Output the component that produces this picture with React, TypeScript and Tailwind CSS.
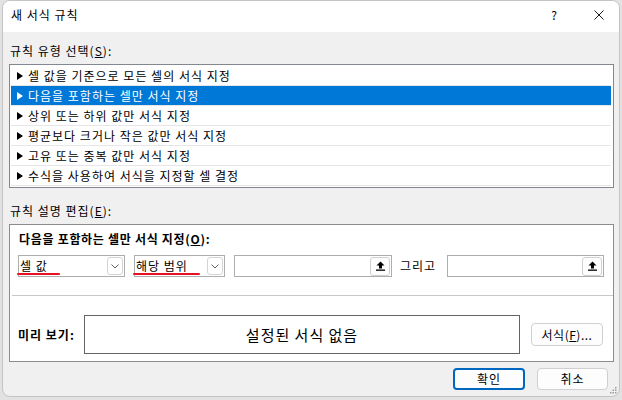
const font = { fontFamily: '"Noto Sans CJK KR", "Noto Sans", sans-serif' };

const rules = [
  "셀 값을 기준으로 모든 셀의 서식 지정",
  "다음을 포함하는 셀만 서식 지정",
  "상위 또는 하위 값만 서식 지정",
  "평균보다 크거나 작은 값만 서식 지정",
  "고유 또는 중복 값만 서식 지정",
  "수식을 사용하여 서식을 지정할 셀 결정",
];

function Chevron() {
  return (
    <span className="flex h-[18px] w-[16px] items-center justify-center rounded-[3px] border border-[#d4d4d4] bg-white">
      <svg width="8" height="5" viewBox="0 0 8 5">
        <path d="M0.5 0.5 L4 4 L7.5 0.5" fill="none" stroke="#606060" strokeWidth="1" />
      </svg>
    </span>
  );
}

function Combo({ label, width, mark }: { label: string; width: string; mark: string }) {
  return (
    <div className={`relative flex h-[22px] items-center justify-between border border-[#adadad] bg-white pl-[1px] pr-[1px] ${width}`}>
      <span className="text-[12px] leading-[16px] text-black">{label}</span>
      <Chevron />
      <span className={`absolute left-[-2px] top-[17px] h-[2px] rounded-full bg-[#e81123] ${mark}`} />
    </div>
  );
}

function RefInput({ width }: { width: string }) {
  return (
    <div className={`flex h-[22px] items-center justify-end border border-[#adadad] bg-white pr-[1px] ${width}`}>
      <span className="flex h-[19px] w-[20px] items-center justify-center rounded-[3px] border border-[#d0d0d0] bg-[#fdfdfd]">
        <svg width="9" height="10" viewBox="0 0 9 10">
          <path d="M4.5 0.5 L8.5 4.5 L6 4.5 L6 7.5 L3 7.5 L3 4.5 L0.5 4.5 Z" fill="#000" />
          <rect x="0" y="8.5" width="9" height="1.3" fill="#000" />
        </svg>
      </span>
    </div>
  );
}

export default function App() {
  return (
    <div className="h-[400px] w-[622px] overflow-hidden bg-[#e2e2e2] pl-[2px] pt-0" style={font}>
      <div className="relative flex h-[397px] w-[618px] flex-col overflow-hidden rounded-[8px] border border-[#c4c4c4] bg-[#f0f0f0] text-[12px] leading-[16px] tracking-[1px] text-black">
        {/* title bar */}
        <div className="flex h-[31px] shrink-0 items-center bg-white pl-[8px]">
          <span className="mt-[-3px]">새 서식 규칙</span>
          <span className="ml-auto mt-[-3px] w-[10px] text-center tracking-normal">?</span>
          <span className="ml-[35px] mr-[15px] mt-[-3px] flex h-[10px] w-[10px] items-center justify-center">
            <svg width="10" height="10" viewBox="0 0 10 10">
              <path d="M0.5 0.5 L9.5 9.5 M9.5 0.5 L0.5 9.5" stroke="#1a1a1a" strokeWidth="1" />
            </svg>
          </span>
        </div>

        <div className="flex flex-col pl-[6px] pr-[5px]">
          <div className="mt-[11px] pl-[1px]">
            규칙 유형 선택(<span className="underline">S</span>):
          </div>

          {/* rule type list */}
          <div className="mt-[5px] flex h-[124px] flex-col border border-[#828790] bg-white p-[1px] pr-[2px]">
            {rules.map((r, i) => {
              const sel = i === 1;
              return (
                <div
                  key={r}
                  className={`flex h-[20px] shrink-0 items-center gap-[5px] border-b border-[#e6e6e6] pl-[6px] ${
                    sel ? "bg-[#0078d7] text-white" : "bg-white text-black"
                  }`}
                >
                  <svg width="6" height="8" viewBox="0 0 6 8">
                    <path d="M0 0 L6 4 L0 8 Z" fill={sel ? "#fff" : "#000"} />
                  </svg>
                  <span>{r}</span>
                </div>
              );
            })}
          </div>

          <div className="mt-[15px] pl-[1px]">
            규칙 설명 편집(<span className="underline">E</span>):
          </div>

          {/* description panel */}
          <div className="mt-[5px] flex h-[138px] flex-col border border-[#8c8c8c] bg-white">
            <div className="mt-[6px] pl-[9px] font-bold tracking-[0.7px]">
              다음을 포함하는 셀만 서식 지정(<span className="underline">O</span>):
            </div>
            <div className="mt-[8px] flex items-center pl-[8px]">
              <Combo label="셀 값" width="w-[107px]" mark="w-[43px]" />
              <div className="ml-[9px]">
                <Combo label="해당 범위" width="w-[91px]" mark="w-[67px]" />
              </div>
              <div className="ml-[9px]">
                <RefInput width="w-[158px]" />
              </div>
              <span className="ml-[8px] w-[39px]">그리고</span>
              <div className="ml-[8px]">
                <RefInput width="w-[157px]" />
              </div>
            </div>
            <div className="ml-[2px] mt-[18px] h-px bg-[#c8c8c8]" />
            <div className="mt-[19px] flex items-center pl-[8px]">
              <span className="w-[66px] font-bold">미리 보기:</span>
              <div className="flex h-[39px] w-[436px] items-center justify-center border border-[#646464] bg-white text-[15px] leading-[20px]">
                설정된 서식 없음
              </div>
              <button className="ml-[11px] flex h-[23px] w-[72px] items-center justify-center rounded-[4px] border border-[#d0d0d0] bg-[#fdfdfd] text-[12px] tracking-[0.5px]">
                서식(<span className="underline">F</span>)...
              </button>
            </div>
          </div>

          {/* footer buttons */}
          <div className="mt-[6px] flex justify-end gap-[12px] pr-[6px]">
            <button className="flex h-[22px] w-[72px] items-center justify-center rounded-[4px] border-2 border-[#0067c0] bg-[#fdfdfd] text-[12px]">
              확인
            </button>
            <button className="flex h-[22px] w-[71px] items-center justify-center rounded-[4px] border border-[#d0d0d0] bg-[#fdfdfd] text-[12px]">
              취소
            </button>
          </div>
        </div>

        {/* resize grip */}
        <svg className="absolute bottom-[2px] right-[2px]" width="7" height="7" viewBox="0 0 7 7">
          <rect x="5" y="0" width="1.5" height="1.5" fill="#9a9a9a" />
          <rect x="2.5" y="2.5" width="1.5" height="1.5" fill="#9a9a9a" />
          <rect x="5" y="2.5" width="1.5" height="1.5" fill="#9a9a9a" />
          <rect x="0" y="5" width="1.5" height="1.5" fill="#9a9a9a" />
          <rect x="2.5" y="5" width="1.5" height="1.5" fill="#9a9a9a" />
          <rect x="5" y="5" width="1.5" height="1.5" fill="#9a9a9a" />
        </svg>
      </div>
    </div>
  );
}
